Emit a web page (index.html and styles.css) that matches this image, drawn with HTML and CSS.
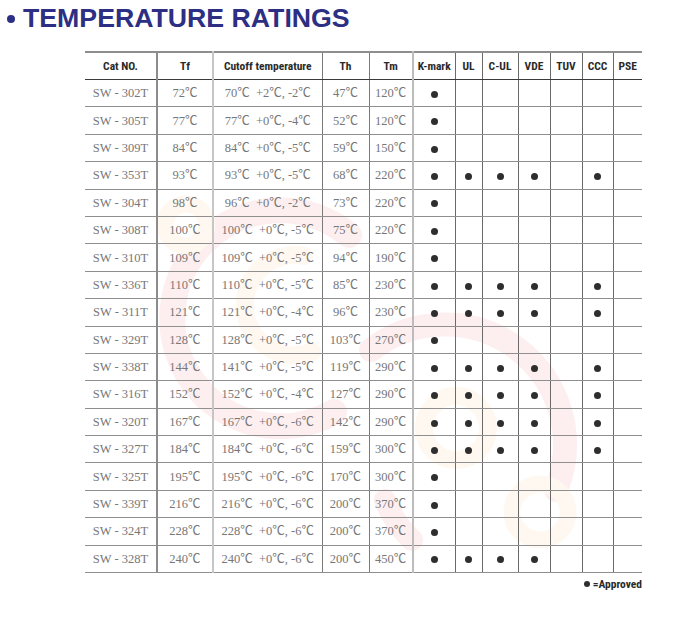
FILE: index.html
```html
<!DOCTYPE html>
<html>
<head>
<meta charset="utf-8">
<title>Temperature Ratings</title>
<link rel="stylesheet" href="styles.css">
</head>
<body>
<div class="page">
  <svg class="watermark" width="682" height="623" viewBox="0 0 682 623" aria-hidden="true">
    <g fill="none" stroke-linecap="round">
      <path d="M349 235 A108 108 0 1 0 334 412" stroke="#fdeff0" stroke-width="26"/>
      <circle cx="186" cy="225" r="21" stroke="#fff8f0" stroke-width="17"/>
      <path d="M304 256 A50 50 0 1 0 312 352" stroke="#fff8f0" stroke-width="18"/>
      <path d="M371 350 A120 120 0 0 1 556 490" stroke="#fdeff0" stroke-width="24"/>
      <path d="M385 500 A110 110 0 0 0 412 540" stroke="#fdeff0" stroke-width="22"/>
      <circle cx="456" cy="428" r="32" stroke="#fff8f0" stroke-width="18"/>
      <circle cx="540" cy="512" r="28" stroke="#fff8f0" stroke-width="17"/>
    </g>
  </svg>

  <h1 class="title"><span class="title-dot"></span>TEMPERATURE RATINGS</h1>

  <div class="table-wrap">
    <table class="ratings">
      <colgroup>
        <col class="w-cat"><col class="w-tf"><col class="w-cut"><col class="w-th"><col class="w-tm">
        <col class="w-k"><col class="w-ul"><col class="w-cul"><col class="w-vde"><col class="w-tuv"><col class="w-ccc"><col class="w-pse">
      </colgroup>
      <thead>
        <tr>
          <th class="c-cat">Cat NO.</th><th class="c-tf">Tf</th><th class="c-cut">Cutoff temperature</th><th class="c-th">Th</th><th class="c-tm">Tm</th>
          <th class="c-m">K-mark</th><th class="c-m">UL</th><th class="c-m">C-UL</th><th class="c-m">VDE</th><th class="c-m">TUV</th><th class="c-m">CCC</th><th class="c-last">PSE</th>
        </tr>
      </thead>
      <tbody id="rows"></tbody>
    </table>
  </div>

  <div class="legend"><span class="legend-dot"></span>=Approved</div>
</div>
<script src="app.js"></script>
</body>
</html>
```

FILE: app.js
```js
var data = [
  ["302", 72, 70, "+2", "-2", 47, 120, "K"],
  ["305", 77, 77, "+0", "-4", 52, 120, "K"],
  ["309", 84, 84, "+0", "-5", 59, 150, "K"],
  ["353", 93, 93, "+0", "-5", 68, 220, "KUCVX"],
  ["304", 98, 96, "+0", "-2", 73, 220, "K"],
  ["308", 100, 100, "+0", "-5", 75, 220, "K"],
  ["310", 109, 109, "+0", "-5", 94, 190, "K"],
  ["336", 110, 110, "+0", "-5", 85, 230, "KUCVX"],
  ["311", 121, 121, "+0", "-4", 96, 230, "KUCVX"],
  ["329", 128, 128, "+0", "-5", 103, 270, "K"],
  ["338", 144, 141, "+0", "-5", 119, 290, "KUCVX"],
  ["316", 152, 152, "+0", "-4", 127, 290, "KUCVX"],
  ["320", 167, 167, "+0", "-6", 142, 290, "KUCVX"],
  ["327", 184, 184, "+0", "-6", 159, 300, "KUCVX"],
  ["325", 195, 195, "+0", "-6", 170, 300, "K"],
  ["339", 216, 216, "+0", "-6", 200, 370, "K"],
  ["324", 228, 228, "+0", "-6", 200, 370, "K"],
  ["328", 240, 240, "+0", "-6", 200, 450, "KUCV"]
];
var marks = ["K", "U", "C", "V", "T", "X", "P"];
var C = "\u2103";
var html = "";
data.forEach(function (r) {
  html += "<tr>";
  html += '<td class="c-cat">SW - ' + r[0] + "T</td>";
  html += '<td class="c-tf">' + r[1] + C + "</td>";
  html += '<td class="c-cut">' + r[2] + C + "&nbsp; " + r[3] + C + ", " + r[4] + C + "</td>";
  html += '<td class="c-th">' + r[5] + C + "</td>";
  html += '<td class="c-tm">' + r[6] + C + "</td>";
  marks.forEach(function (m, i) {
    var cls = i === marks.length - 1 ? "c-last" : "c-m";
    html += '<td class="' + cls + '">' + (r[7].indexOf(m) >= 0 ? '<span class="dot"></span>' : "") + "</td>";
  });
  html += "</tr>";
});
document.getElementById("rows").innerHTML = html;
```

FILE: styles.css
```css
html, body {
  margin: 0;
  padding: 0;
  background: #ffffff;
}

.page {
  position: relative;
  width: 682px;
  height: 623px;
  overflow: hidden;
}

.watermark {
  position: absolute;
  left: 0;
  top: 0;
  z-index: 0;
}

.title {
  position: relative;
  z-index: 1;
  margin: 0;
  padding: 1px 0 0 7px;
  height: 34px;
  line-height: 34px;
  font-family: "Liberation Sans", Arial, sans-serif;
  font-weight: bold;
  font-size: 26.7px;
  color: #2c2f83;
  display: flex;
  align-items: center;
  gap: 8px;
}

.title-dot {
  display: inline-block;
  width: 8px;
  height: 8px;
  border-radius: 50%;
  background: #2c2f83;
  margin-top: 2px;
}

.table-wrap {
  position: relative;
  z-index: 1;
  margin: 16px 0 0 85px;
  width: 557px;
}

.ratings {
  border-collapse: collapse;
  table-layout: fixed;
  width: 557px;
}

.w-cat { width: 72px; }
.w-tf { width: 56px; }
.w-cut { width: 109px; }
.w-th { width: 47px; }
.w-tm { width: 44px; }
.w-k { width: 42px; }
.w-ul { width: 27px; }
.w-cul { width: 36px; }
.w-vde { width: 32px; }
.w-tuv { width: 32px; }
.w-ccc { width: 31px; }
.w-pse { width: 29px; }

.ratings th {
  height: 26px;
  padding: 0;
  font-family: "Liberation Sans Narrow", "Roboto Condensed", "Liberation Sans", sans-serif;
  font-weight: bold;
  font-size: 11.5px;
  line-height: 14px;
  color: #2a2a2a;
  text-align: center;
  vertical-align: middle;
  border-top: 2px solid #8e8e8e;
  border-bottom: 1px solid #3a3a3a;
  white-space: nowrap;
}

.ratings td {
  height: 26.4px;
  padding: 0;
  font-family: "Liberation Serif", "Noto Sans CJK KR", serif;
  font-size: 12.5px;
  line-height: 14px;
  color: #777777;
  text-align: center;
  vertical-align: middle;
  border-bottom: 1px solid #8f8f8f;
  white-space: nowrap;
}

.ratings .c-cat { border-right: 2px solid #8c8c8c; }
.ratings .c-tf { border-right: 2px solid #c6c6c6; }
.ratings .c-cut { border-right: 1px solid #7a7a7a; }
.ratings .c-th { border-right: 1px solid #7a7a7a; }
.ratings .c-tm { border-right: 2px solid #bcbcbc; }
.ratings .c-m { border-right: 1px solid #6a6a6a; }
.ratings .c-last { border-right: none; }

.dot {
  display: inline-block;
  width: 7px;
  height: 7px;
  border-radius: 50%;
  background: #2e2e2e;
  vertical-align: middle;
}

.legend {
  position: relative;
  z-index: 1;
  width: 557px;
  margin: 4px 0 0 85px;
  display: flex;
  justify-content: flex-end;
  align-items: center;
  gap: 3px;
  font-family: "Liberation Sans Narrow", "Roboto Condensed", "Liberation Sans", sans-serif;
  font-weight: bold;
  font-size: 11.5px;
  color: #2a2a2a;
}

.legend-dot {
  display: inline-block;
  width: 6px;
  height: 6px;
  border-radius: 50%;
  background: #2e2e2e;
}
```
